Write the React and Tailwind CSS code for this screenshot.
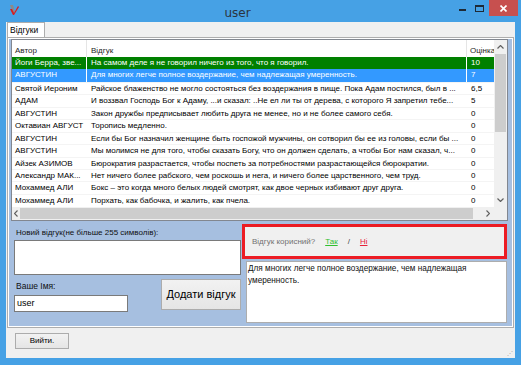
import React from 'react';

const rows = [
  ['Йоги Берра, зве...', 'На самом деле я не говорил ничего из того, что я говорил.', '10'],
  ['АВГУСТИН', 'Для многих легче полное воздержание, чем надлежащая умеренность.', '7'],
  ['Святой Иероним', 'Райское блаженство не могло состояться без воздержания в пище. Пока Адам постился, был в ...', '6,5'],
  ['АДАМ', 'И воззвал Господь Бог к Адаму, ...и сказал: ..Не ел ли ты от дерева, с которого Я запретил тебе...', '5'],
  ['АВГУСТИН', 'Закон дружбы предписывает любить друга не менее, но и не более самого себя.', '0'],
  ['Октавиан АВГУСТ', 'Торопись медленно.', '0'],
  ['АВГУСТИН', 'Если бы Бог назначил женщине быть госпожой мужчины, он сотворил бы ее из головы, если бы ...', '0'],
  ['АВГУСТИН', 'Мы молимся не для того, чтобы сказать Богу, что он должен сделать, а чтобы Бог нам сказал, ч...', '0'],
  ['Айзек АЗИМОВ', 'Бюрократия разрастается, чтобы поспеть за потребностями разрастающейся бюрократии.', '0'],
  ['Александр МАК...', 'Нет ничего более рабского, чем роскошь и нега, и ничего более царственного, чем труд.', '0'],
  ['Мохаммед АЛИ', 'Бокс – это когда много белых людей смотрят, как двое черных избивают друг друга.', '0'],
  ['Мохаммед АЛИ', 'Порхать, как бабочка, и жалить, как пчела.', '0'],
];

function rowClass(i) {
  if (i === 0) return 'bg-[#008000] text-white';
  if (i === 1) return 'bg-[#3399ff] text-white';
  return 'bg-white text-black';
}

function AppIcon() {
  return (
    <svg width="12" height="12" viewBox="0 0 12 12">
      <path d="M2 1 L5 1 L7 8 L5 9 Z" fill="#8a8a8a" />
      <path d="M2 5 L4 5 L6 9 L10 2 L11 3 L6 11 L5 11 Z" fill="#d81e1e" />
    </svg>
  );
}

export default function App() {
  return (
    <div className="w-[521px] h-[365px] bg-[#46a1e5] flex flex-col px-[6px] pb-[7px] font-['Liberation_Sans',sans-serif] text-[8px] text-black overflow-hidden">
      {/* title bar */}
      <div className="h-[22px] flex items-start relative">
        <div className="mt-[4px] ml-[2px]"><AppIcon /></div>
        <div className="flex-1 text-center text-[12px] text-[#2b3440] pt-[4px] font-['DejaVu_Sans',sans-serif]">user</div>
        <div className="flex items-start">
          <div className="w-[14px] h-[16px] flex items-center justify-center">
            <div className="w-[7px] h-[2px] bg-[#1e2a36] mt-[4px]" />
          </div>
          <div className="w-[20px] h-[16px] flex items-center justify-center">
            <div className="w-[9px] h-[7px] border border-[#1e2a36] border-t-2" />
          </div>
          <div className="w-[29px] h-[16px] bg-[#c7504f] flex items-center justify-center mr-[-3px]">
            <svg width="7" height="7" viewBox="0 0 7 7"><path d="M0.5 0.5 L6.5 6.5 M6.5 0.5 L0.5 6.5" stroke="white" strokeWidth="1.6" /></svg>
          </div>
        </div>
      </div>

      {/* client */}
      <div className="flex-1 bg-[#f0f0f0] flex flex-col">
        {/* tabs */}
        <div className="h-[15px] flex items-end pl-[1px]">
          <div className="h-[15px] w-[38px] bg-white border border-b-0 border-[#adadad] pl-[2px] pt-[1px] text-[8.5px] leading-[12px]">Відгуки</div>
        </div>
        <div className="mx-[1px] h-[291px] border border-[#adadad] bg-white p-[1px]">
          <div className="h-full bg-[#a6bfe0] pl-[2px] flex flex-col">
            {/* list */}
            <div className="w-[497px] h-[182px] border border-[#828790] bg-white flex flex-col">
              <div className="flex flex-1 min-h-0">
                <div className="flex-1 flex flex-col min-w-0">
                  <div className="h-[17px] flex shrink-0 text-[#1e1e1e]">
                    <div className="w-[75px] pl-[3px] pt-[5px] border-r border-[#e5e5e5]">Автор</div>
                    <div className="w-[380px] pl-[4px] pt-[5px] border-r border-[#e5e5e5]">Відгук</div>
                    <div className="flex-1 pl-[3px] pt-[5px] whitespace-nowrap overflow-hidden">Оцінка</div>
                  </div>
                  {rows.map((r, i) => (
                    <div key={i} className={`h-[12.45px] flex leading-[12px] whitespace-nowrap ${i > 1 ? 'border-t border-[#f4f4f4]' : ''}`}>
                      <div className={`w-[75px] pl-[3px] overflow-hidden border-r border-white ${rowClass(i)}`}>{r[0]}</div>
                      <div className={`w-[380px] pl-[4px] overflow-hidden border-r border-white ${rowClass(i)}`}>{r[1]}</div>
                      <div className={`flex-1 pl-[4px] overflow-hidden ${rowClass(i)}`}>{r[2]}</div>
                    </div>
                  ))}
                </div>
                {/* vertical scrollbar */}
                <div className="w-[13px] bg-[#f0f0f0] flex flex-col items-center shrink-0">
                  <div className="h-[14px] flex items-center justify-center">
                    <svg width="7" height="4" viewBox="0 0 7 4"><path d="M0.5 3.5 L3.5 0.5 L6.5 3.5" stroke="#606060" fill="none" strokeWidth="1.2" /></svg>
                  </div>
                  <div className="w-[11px] h-[78px] bg-[#cdcdcd]" />
                  <div className="flex-1" />
                  <div className="h-[14px] flex items-center justify-center">
                    <svg width="7" height="4" viewBox="0 0 7 4"><path d="M0.5 0.5 L3.5 3.5 L6.5 0.5" stroke="#606060" fill="none" strokeWidth="1.2" /></svg>
                  </div>
                </div>
              </div>
              {/* horizontal scrollbar */}
              <div className="h-[13px] flex bg-[#f0f0f0] shrink-0">
                <div className="w-[8px] flex items-center justify-center">
                  <svg width="4" height="7" viewBox="0 0 4 7"><path d="M3.5 0.5 L0.5 3.5 L3.5 6.5" stroke="#606060" fill="none" strokeWidth="1.2" /></svg>
                </div>
                <div className="w-[453px] my-[1px] bg-[#cdcdcd]" />
                <div className="flex-1 flex items-center justify-end pr-[4px]">
                  <svg width="4" height="7" viewBox="0 0 4 7"><path d="M0.5 0.5 L3.5 3.5 L0.5 6.5" stroke="#606060" fill="none" strokeWidth="1.2" /></svg>
                </div>
                <div className="w-[13px]" />
              </div>
            </div>

            {/* lower part */}
            <div className="flex">
              <div className="w-[227px] ml-[3px] flex flex-col">
                <div className="mt-[6px] h-[12px] leading-[12px] pl-[2px] text-[8px] text-[#101010]">Новий відгук(не більше 255 символів):</div>
                <div className="mt-[1px] h-[35px] bg-white border border-[#7a7a7a]" />
                <div className="flex mt-[4px]">
                  <div className="flex flex-col">
                    <div className="h-[12px] leading-[12px] pl-[2px] mt-[1px] text-[8.5px] text-[#101010]">Ваше Імя:</div>
                    <div className="mt-[3px] w-[114px] h-[17px] bg-white border border-[#7a7a7a] pl-[2px] leading-[15px] text-[9px]">user</div>
                  </div>
                  <div className="ml-auto w-[80px] h-[31px] bg-gradient-to-b from-[#f2f2f2] to-[#e5e5e5] border border-[#acacac] flex items-center justify-center text-[11px]">Додати відгук</div>
                </div>
              </div>
              <div className="w-[265px] ml-[1px] flex flex-col">
                <div className="mt-[3px] h-[35px] border-[3px] border-[#ec1c24] bg-[#f0f0f0] flex items-center pl-[7px] pt-[1px]">
                  <span className="text-[#707070]">Відгук корисний?</span>
                  <span className="ml-[10px] text-[#2fbf2f] underline">Так</span>
                  <span className="ml-[10px] text-[#404040]">/</span>
                  <span className="ml-[10px] text-[#e8203a] underline">Ні</span>
                </div>
                <div className="mt-[2px] ml-[4px] h-[62px] bg-white border border-[#adadad] px-[1px] pt-[1px] text-[8.2px] leading-[12px] text-[#101010]">
                  Для многих легче полное воздержание, чем надлежащая умеренность.
                </div>
              </div>
            </div>
          </div>
        </div>

        {/* bottom */}
        <div className="flex-1 relative pl-[9px] pt-[5px]">
          <div className="w-[54px] h-[16px] bg-gradient-to-b from-[#f2f2f2] to-[#e5e5e5] border border-[#acacac] flex items-center justify-center text-[8px]">Вийти.</div>
          <div className="absolute right-[2px] bottom-[2px] text-[#a0a0a0] text-[6px] leading-[6px]">⋰</div>
        </div>
      </div>
    </div>
  );
}
